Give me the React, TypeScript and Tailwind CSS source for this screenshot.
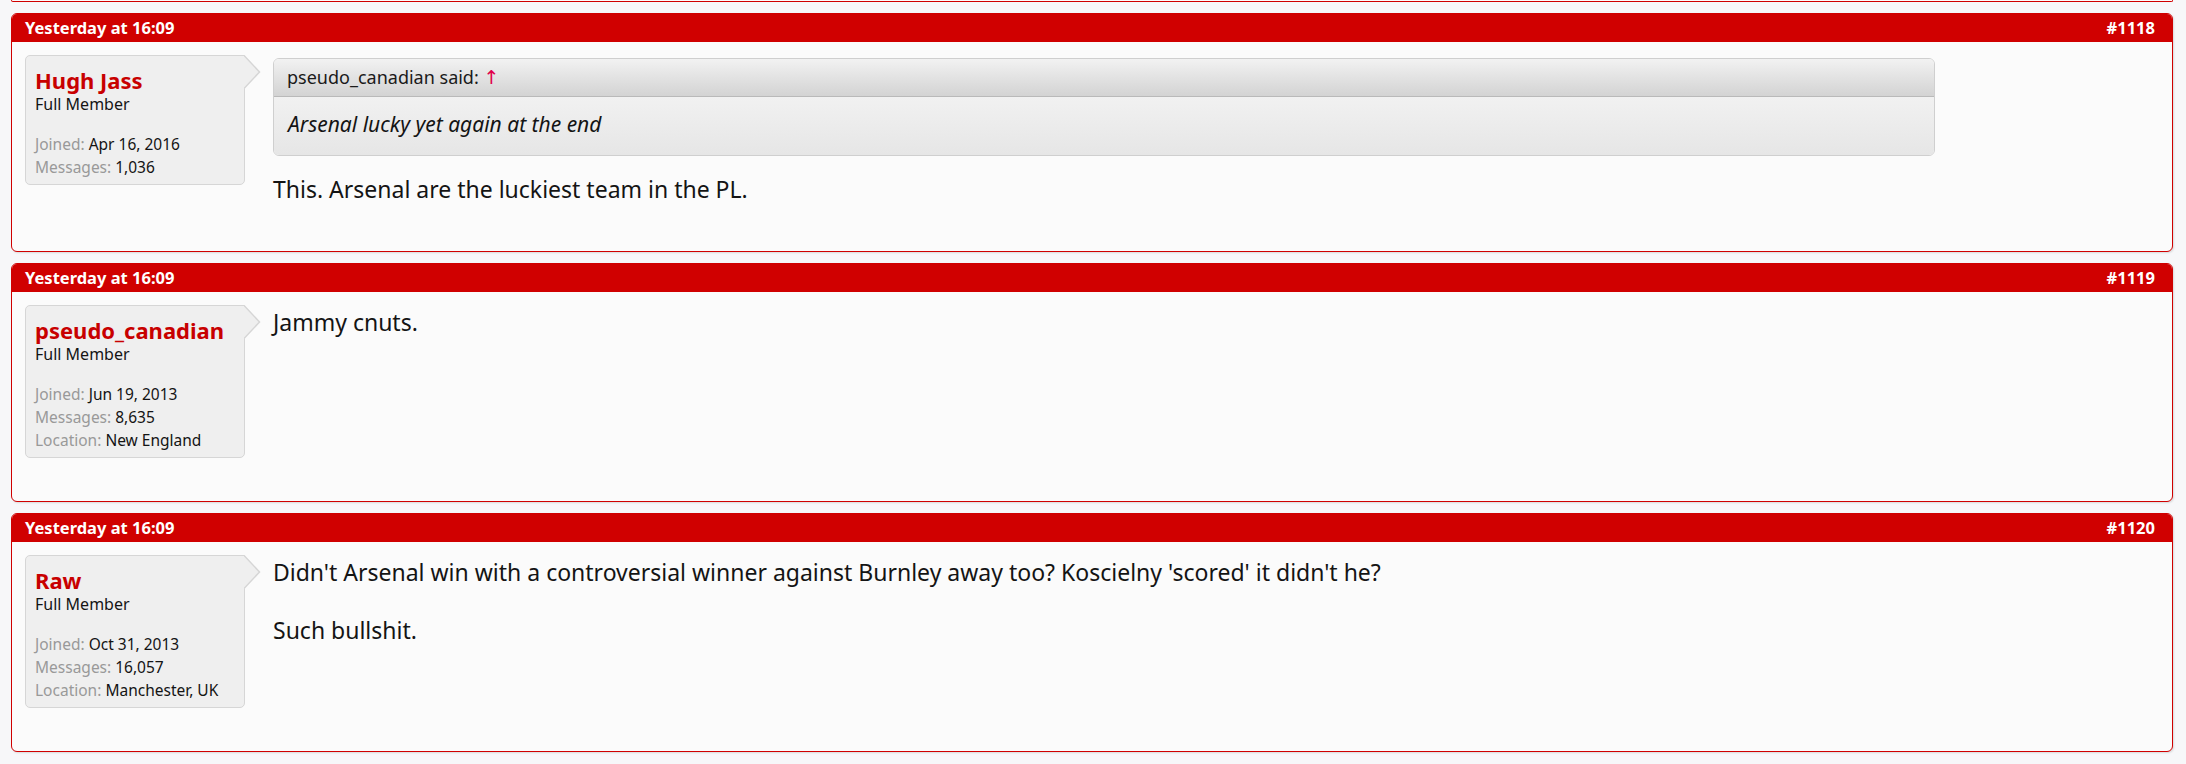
import React from 'react';

type Post = {
  id: number;
  date: string;
  name: string;
  title: string;
  joined: string;
  messages: string;
  location?: string;
  quote?: { author: string; text: string };
  body: string[];
};

const posts: Post[] = [
  {
    id: 1118,
    date: 'Yesterday at 16:09',
    name: 'Hugh Jass',
    title: 'Full Member',
    joined: 'Apr 16, 2016',
    messages: '1,036',
    quote: { author: 'pseudo_canadian', text: 'Arsenal lucky yet again at the end' },
    body: ['This. Arsenal are the luckiest team in the PL.'],
  },
  {
    id: 1119,
    date: 'Yesterday at 16:09',
    name: 'pseudo_canadian',
    title: 'Full Member',
    joined: 'Jun 19, 2013',
    messages: '8,635',
    location: 'New England',
    body: ['Jammy cnuts.'],
  },
  {
    id: 1120,
    date: 'Yesterday at 16:09',
    name: 'Raw',
    title: 'Full Member',
    joined: 'Oct 31, 2013',
    messages: '16,057',
    location: 'Manchester, UK',
    body: [
      "Didn't Arsenal win with a controversial winner against Burnley away too? Koscielny 'scored' it didn't he?",
      'Such bullshit.',
    ],
  },
];

const UserBlock = ({ post }: { post: Post }) => {
  return (
    <div className="relative w-[220px] shrink-0 self-start rounded-[5px] rounded-tr-none border border-[#d6d6d6] bg-[#efefef] pl-[9px] pt-[10px] pb-[5px]">
      <div className="text-[22px] leading-[28px] font-bold text-[#c80000]">{post.name}</div>
      <div className="text-[16px] leading-[21px] text-[#141414]">{post.title}</div>
      <div className="mt-[18px] text-[15.5px] leading-[23px]">
        <div>
          <span className="text-[#999999]">Joined: </span>
          <span className="text-[#141414]">{post.joined}</span>
        </div>
        <div>
          <span className="text-[#999999]">Messages: </span>
          <span className="text-[#141414]">{post.messages}</span>
        </div>
        {post.location ? (
          <div>
            <span className="text-[#999999]">Location: </span>
            <span className="text-[#141414]">{post.location}</span>
          </div>
        ) : null}
      </div>
      {/* speech arrow */}
      <svg className="absolute top-[-1px] left-[218px]" width="17" height="35" viewBox="0 0 17 35">
        <polygon points="0,0 16,17 0,34" fill="#efefef" />
        <path d="M0,0.5 L15.5,17 L0,33.5" fill="none" stroke="#d6d6d6" strokeWidth="1.5" />
      </svg>
    </div>
  );
};

const Quote = ({ author, text }: { author: string; text: string }) => (
  <div className="w-[1662px] overflow-hidden rounded-[6px] border border-[#cfcfcf]">
    <div className="flex h-[38px] items-center border-b border-[#b9b9b9] bg-linear-to-b from-[#f2f2f2] to-[#d3d3d3] px-[13px] text-[18px] text-[#1a1a1a]">
      {author} said:&nbsp;
      <span className="font-['DejaVu_Sans',sans-serif] text-[19px] leading-none text-[#e0004b]">↑</span>
    </div>
    <div className="bg-linear-to-b from-[#f1f1f1] to-[#e6e6e6] px-[14px] pt-[13px] pb-[17px] text-[21px] leading-[28px] italic text-[#141414]">
      {text}
    </div>
  </div>
);

const PostCard = ({ post }: { post: Post }) => (
  <div className="overflow-hidden rounded-[6px] border border-[#d00000] bg-[#fbfbfb] shadow-[1px_1px_2px_rgba(0,0,0,0.12)]">
    <div className="flex h-[28px] items-center justify-between bg-[#d00000] pl-[13px] pr-[17px] text-[16.5px] font-bold text-white">
      <span>{post.date}</span>
      <span>#{post.id}</span>
    </div>
    <div className="flex min-h-[209px] pl-[13px] pt-[13px]">
      <UserBlock post={post} />
      <div className="ml-[28px] pt-[3px]">
        {post.quote ? (
          <div className="mb-[19px]">
            <Quote author={post.quote.author} text={post.quote.text} />
          </div>
        ) : null}
        <div className="text-[23px] leading-[29px] text-[#141414]">
          {post.body.map((line, i) => (
            <React.Fragment key={i}>
              {i > 0 ? (
                <>
                  <br />
                  <br />
                </>
              ) : null}
              {line}
            </React.Fragment>
          ))}
        </div>
      </div>
    </div>
  </div>
);

export default function App() {
  return (
    <div className="min-h-[764px] bg-[#f7f7f9] pl-[11px] pr-[13px] font-['Noto_Sans',sans-serif]">
      {/* tail of the previous post */}
      <div className="h-[2px] rounded-b-[6px] border-x border-b border-[#d00000] bg-[#fbfbfb]" />
      <div className="mt-[11px] flex flex-col gap-[11px]">
        {posts.map((p) => (
          <PostCard key={p.id} post={p} />
        ))}
      </div>
    </div>
  );
}
